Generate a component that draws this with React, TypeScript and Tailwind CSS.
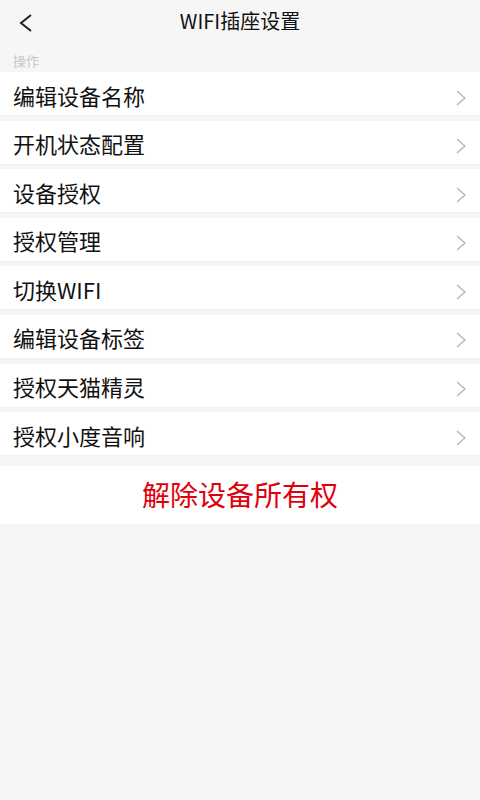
const items = [
  '编辑设备名称',
  '开机状态配置',
  '设备授权',
  '授权管理',
  '切换WIFI',
  '编辑设备标签',
  '授权天猫精灵',
  '授权小度音响',
];

const font = { fontFamily: '"Noto Sans CJK SC", "Noto Sans", sans-serif' };

function Chevron({ className }: { className?: string }) {
  return (
    <svg className={className} viewBox="0 0 10 16" fill="none" stroke="currentColor" strokeWidth={1.3}>
      <path d="M1 1l8 7-8 7" />
    </svg>
  );
}

export default function App() {
  return (
    <div className="w-[480px] h-[800px] bg-[#f6f6f6]" style={font}>
      {/* header */}
      <div className="relative h-[45px] flex items-center justify-center">
        <svg className="absolute left-[19px] top-[14px] w-[14px] h-[18px] text-[#222]" viewBox="0 0 14 18" fill="none" stroke="currentColor" strokeWidth={2}>
          <path d="M12 1L2 9l10 8" />
        </svg>
        <span className="text-[20px] text-[#111] leading-none -mt-[3px]">WIFI插座设置</span>
      </div>

      <div className="h-[27px] flex items-center px-[13px] text-[13px] text-[#c8c8c8] leading-none pt-[3px]">操作</div>

      <div className="flex flex-col gap-[5.6px]">
        {items.map((label) => (
          <div key={label} className="h-[43px] bg-white flex items-center justify-between pl-[13px] pr-[14px] shadow-[0_1px_2px_rgba(0,0,0,0.03)]">
            <span className="text-[22px] text-[#111] leading-none mt-[2px]">{label}</span>
            <Chevron className="w-[10px] h-[16px] text-[#b4b4b4] mt-[8px]" />
          </div>
        ))}
      </div>

      <div className="mt-[11px] h-[58px] bg-white flex items-center justify-center">
        <span className="text-[28px] text-[#e0000b] leading-none -mt-[2px]">解除设备所有权</span>
      </div>
    </div>
  );
}
